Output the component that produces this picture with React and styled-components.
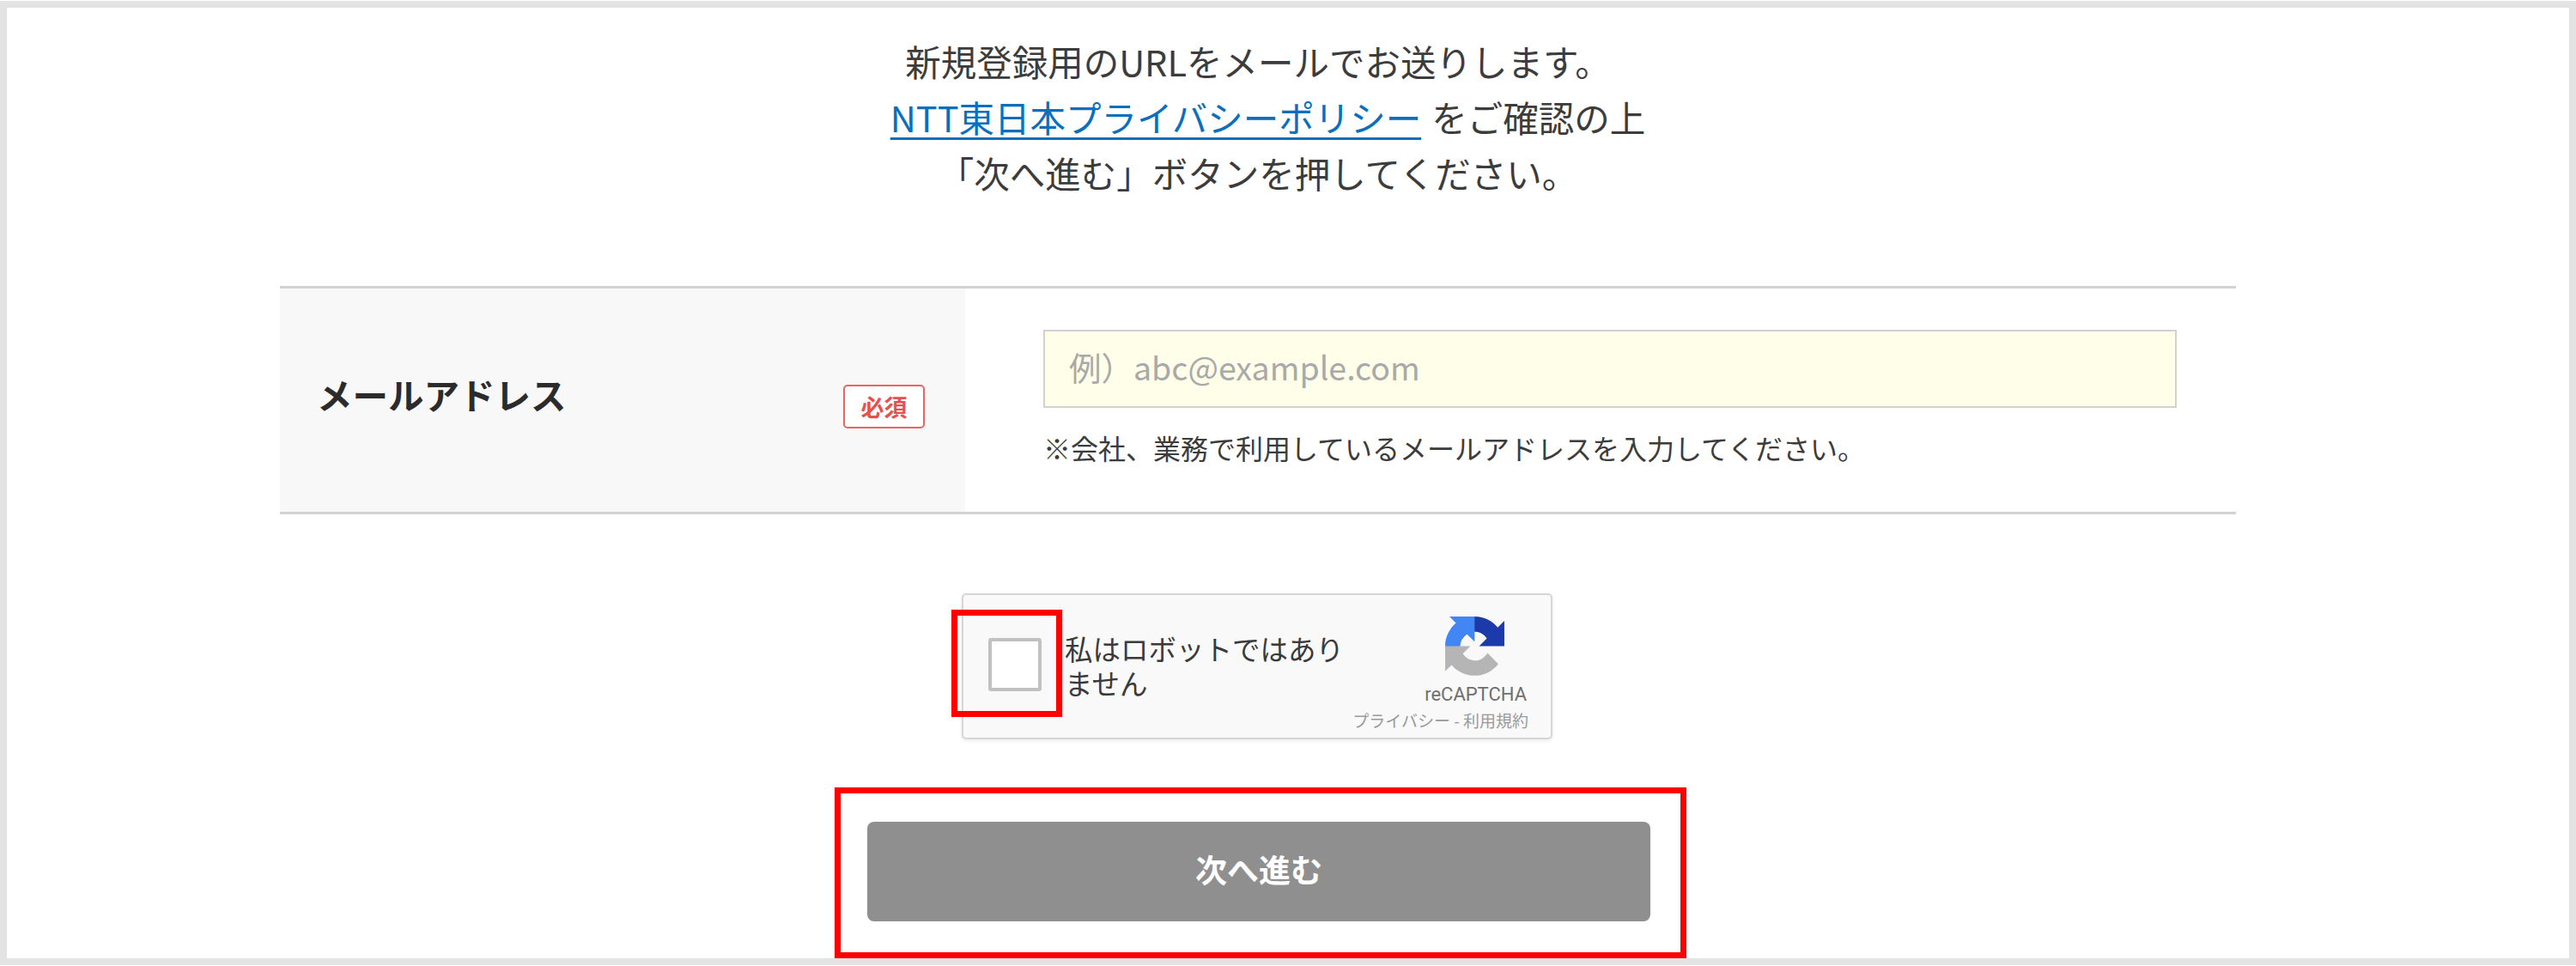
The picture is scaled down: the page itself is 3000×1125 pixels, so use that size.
import React from "react";
import styled, { createGlobalStyle } from "styled-components";

const GlobalStyle = createGlobalStyle`
  html, body {
    margin: 0;
    padding: 0;
    background: #fff;
  }
  body {
    padding-top: 1px;
    font-family: "Noto Sans CJK JP", "Liberation Sans", sans-serif;
    color: #333;
  }
`;

const Frame = styled.div`
  box-sizing: border-box;
  width: 3000px;
  height: 1123px;
  border: 8px solid #e3e3e3;
  padding: 30px 388px 0 318px;
  overflow: hidden;
`;
const Intro = styled.p`
  margin: 0;
  height: 294px;
  text-align: center;
  font-size: 41.5px;
  line-height: 65px;
  color: #3c3c3c;
`;
const PolicyLink = styled.a`
  color: #0b6fbd;
  text-decoration: underline;
  text-decoration-thickness: 3px;
  text-underline-offset: 6px;
  margin: 0 12px 0 23px;
`;
const Row = styled.div`
  display: grid;
  grid-template-columns: 798px 1fr;
  height: 266px;
  box-sizing: border-box;
  border-top: 3px solid #d2d2d2;
  border-bottom: 3px solid #d2d2d2;
`;
const LabelCell = styled.div`
  display: flex;
  justify-content: space-between;
  align-items: center;
  padding: 0 47px 0 43px;
  background: #f8f8f8;
`;
const Label = styled.span`
  font-size: 41.5px;
  font-weight: 700;
  color: #2b2b2b;
  margin-bottom: 14px;
`;
const Badge = styled.span`
  box-sizing: border-box;
  display: flex;
  align-items: center;
  justify-content: center;
  width: 95px;
  height: 51px;
  margin-top: 15px;
  background: #fff;
  border: 2px solid #ee6262;
  border-radius: 5px;
  font-size: 27px;
  font-weight: 700;
  color: #e84f4f;
`;
const FieldCell = styled.div`
  padding: 48px 0 0 91px;
`;
const EmailInput = styled.input`
  display: block;
  box-sizing: border-box;
  width: 1320px;
  height: 91px;
  padding: 0 28px 6px;
  background: #fffee8;
  border: 2px solid #d2d2d2;
  border-radius: 0;
  font-family: inherit;
  font-size: 37.5px;
  outline: none;
  &::placeholder {
    color: #a9a9a9;
    opacity: 1;
  }
`;
const Hint = styled.p`
  margin: 22px 0 0 0;
  font-size: 32px;
  line-height: 48px;
  color: #3c3c3c;
`;
const Captcha = styled.div`
  position: relative;
  box-sizing: border-box;
  display: flex;
  width: 688px;
  height: 170px;
  margin: 92px 0 0 794px;
  background: #f9f9f9;
  border: 2px solid #d6d6d6;
  border-radius: 5px;
  box-shadow: 0 2px 4px rgba(0, 0, 0, 0.08);
  padding: 50px 0 0 29px;
`;
const CheckBox = styled.div`
  box-sizing: border-box;
  flex: none;
  width: 62px;
  height: 62px;
  background: #fff;
  border: 4px solid #c1c1c1;
  border-radius: 3px;
`;
const CaptchaText = styled.div`
  width: 334px;
  margin-left: 27px;
  margin-top: -8px;
  font-size: 32.5px;
  line-height: 40px;
  color: #3a3a3a;
`;
const Brand = styled.div`
  display: flex;
  flex-direction: column;
  align-items: flex-end;
  position: absolute;
  right: 26px;
  top: 25px;
`;
const LogoWrap = styled.div`
  display: flex;
  margin-right: 28px;
`;
const BrandName = styled.div`
  margin: 8px 2px 0 0;
  font-family: "Roboto", "Liberation Sans", sans-serif;
  font-size: 22px;
  line-height: 28px;
  color: #6f6f6f;
`;
const BrandLinks = styled.div`
  margin-top: 4px;
  white-space: nowrap;
  font-size: 19px;
  line-height: 24px;
  color: #9a9a9a;
`;
const Highlight = styled.div`
  position: absolute;
  left: -14px;
  top: 17px;
  box-sizing: border-box;
  width: 129px;
  height: 125px;
  border: 7px solid #f00;
`;
const ButtonFrame = styled.div`
  box-sizing: border-box;
  width: 992px;
  height: 199px;
  margin: 56px 0 0 646px;
  padding: 33px 35px 0 31px;
  border: 7px solid #f00;
`;
const NextButton = styled.button`
  display: block;
  width: 100%;
  height: 116px;
  padding: 0 0 6px;
  background: #8f8f8f;
  border: none;
  border-radius: 8px;
  font-family: inherit;
  font-size: 37px;
  font-weight: 700;
  color: #fff;
`;

const RecaptchaLogo = () => (
  <svg width="69" height="69" viewBox="0 0 64 64" aria-hidden="true">
    <path
      d="M64 31.955l-.033-1.37V4.687l-7.16 7.16C50.948 4.674 42.033.093 32.05.093c-10.4 0-19.622 4.96-25.458 12.64l11.736 11.86a15.55 15.55 0 0 1 4.754-5.334c2.05-1.6 4.952-2.906 8.968-2.906.485 0 .86.057 1.135.163 4.976.393 9.288 3.14 11.828 7.124l-8.307 8.307c10.522-.04 22.4-.066 27.295.006"
      fill="#1c3aa9"
    />
    <path
      d="M31.9.001l-1.37.033H4.63l7.16 7.16C4.616 13.05.035 21.967.035 31.95c0 10.4 4.96 19.622 12.64 25.458l11.86-11.736a15.55 15.55 0 0 1-5.334-4.754c-1.6-2.05-2.906-4.952-2.906-8.968 0-.485.057-.86.163-1.135.393-4.976 3.14-9.288 7.124-11.828l8.307 8.307c-.04-10.522-.066-22.4.006-27.295"
      fill="#4285f4"
    />
    <path
      d="M.002 31.953l.033 1.37v25.898l7.16-7.16c5.86 7.173 14.775 11.754 24.76 11.754 10.4 0 19.622-4.96 25.458-12.64l-11.736-11.86a15.55 15.55 0 0 1-4.754 5.334c-2.05 1.6-4.952 2.906-8.968 2.906-.485 0-.86-.057-1.135-.163-4.976-.393-9.288-3.14-11.828-7.124l8.307-8.307c-10.522.04-22.4.066-27.295-.006"
      fill="#b5b5b5"
    />
  </svg>
);

const App = () => {
  return (
    <>
      <GlobalStyle />
      <Frame>
        <Intro>
          新規登録用のURLをメールでお送りします。
          <br />
          <PolicyLink href="#">NTT東日本プライバシーポリシー</PolicyLink>をご確認の上
          <br />
          「次へ進む」ボタンを押してください。
        </Intro>
        <Row>
          <LabelCell>
            <Label>メールアドレス</Label>
            <Badge>必須</Badge>
          </LabelCell>
          <FieldCell>
            <EmailInput placeholder="例）abc@example.com" />
            <Hint>※会社、業務で利用しているメールアドレスを入力してください。</Hint>
          </FieldCell>
        </Row>
        <Captcha>
          <Highlight />
          <CheckBox />
          <CaptchaText>私はロボットではありません</CaptchaText>
          <Brand>
            <LogoWrap>
              <RecaptchaLogo />
            </LogoWrap>
            <BrandName>reCAPTCHA</BrandName>
            <BrandLinks>プライバシー - 利用規約</BrandLinks>
          </Brand>
        </Captcha>
        <ButtonFrame>
          <NextButton>次へ進む</NextButton>
        </ButtonFrame>
      </Frame>
    </>
  );
};

export default App;
